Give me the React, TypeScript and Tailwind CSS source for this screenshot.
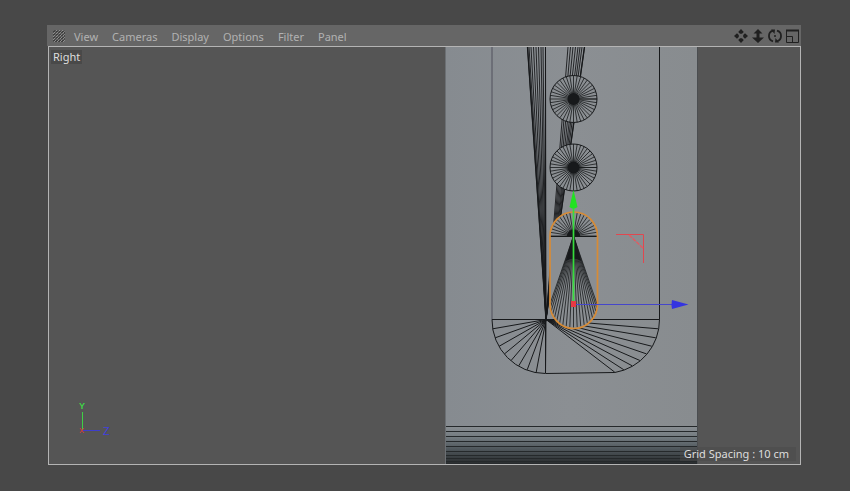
const point = (cx: number, cy: number, r: number, deg: number) => {
  const a = (deg * Math.PI) / 180;
  return [cx + r * Math.cos(a), cy + r * Math.sin(a)];
};

type FanProps = { from: [number, number]; centre: [number, number]; r: number; start: number; end: number; count: number; width?: number };

function Fan({ from, centre, r, start, end, count, width = 1 }: FanProps) {
  const d = Array.from({ length: count + 1 }, (_, i) => {
    const [x, y] = point(centre[0], centre[1], r, start + ((end - start) * i) / count);
    return `M${from[0]} ${from[1]}L${x.toFixed(2)} ${y.toFixed(2)}`;
  }).join("");
  return <path d={d} stroke="#17191b" strokeWidth={width} fill="none" />;
}

function Disc({ cy }: { cy: number }) {
  return (
    <g>
      <circle cx="573.5" cy={cy} r="23.5" fill="#8a8e92" stroke="#17191b" />
      <Fan from={[573.5, cy]} centre={[573.5, cy]} r={23.5} start={0} end={360} count={40} width={0.8} />
      <circle cx="573.5" cy={cy} r="6" fill="#17191b" />
    </g>
  );
}

const LEFT_BUNDLE = [527.5, 529, 531, 533.5, 536, 538.5, 541, 543, 545.5];
const RIGHT_BUNDLE = [568, 570.5, 573, 575.5, 578, 580, 582, 584.5];
const EDGE_ROWS = [426.5, 431.5, 436.5, 441.5, 446.5, 451.5, 455.5, 458.5, 461.5];

function Scene() {
  return (
    <svg viewBox="49 47 751 417" preserveAspectRatio="xMidYMid slice" className="block w-full" aria-label="Right viewport">
      <defs>
        <linearGradient id="face" x1="0" y1="0" x2="1" y2="0">
          <stop offset="0" stopColor="#868b90" />
          <stop offset="0.5" stopColor="#8b8f93" />
          <stop offset="1" stopColor="#888c8f" />
        </linearGradient>
        <linearGradient id="edge" x1="0" y1="0" x2="0" y2="1">
          <stop offset="0" stopColor="#8a8f93" />
          <stop offset="0.3" stopColor="#727a7f" />
          <stop offset="0.6" stopColor="#50585d" />
          <stop offset="1" stopColor="#282b2d" />
        </linearGradient>
      </defs>
      <rect x="445" y="47" width="252" height="417" fill="url(#face)" />
      <rect x="445" y="426" width="252" height="38" fill="url(#edge)" />
      <path d={EDGE_ROWS.map((y) => `M445 ${y}H698`).join("")} stroke="#25292b" strokeWidth="1" />
      <path d="M445.5 47V464" stroke="#6c7074" />
      <path d="M697.5 47V464" stroke="#4a4d50" />
      <g stroke="#17191b" fill="none">
        <path d="M492 47V319.5" stroke="#50515d" />
        <path d="M659.5 47V319.5M492 319.5H659.5M545.5 47V373" />
        <path d="M492 319.5A53.5 53.5 0 0 0 545.5 373.5L614.8 372.5A53.5 53.5 0 0 0 659.5 319.5" />
        <path d={LEFT_BUNDLE.map((x) => `M${x} 47L546 319.5`).join("")} strokeWidth="0.9" />
        <path d={RIGHT_BUNDLE.map((x) => `M${x} 47L546 319.5`).join("")} strokeWidth="0.9" />
        <path d="M527.5 47L546 319.5M584.5 47L546 319.5" strokeWidth="1.3" />
      </g>
      <Fan from={[546, 319.5]} centre={[545.5, 319.5]} r={53.5} start={90} end={180} count={9} />
      <Fan from={[546, 319.5]} centre={[605.5, 319.5]} r={53.5} start={0} end={80} count={8} />
      <Disc cy={99} />
      <Disc cy={167.5} />
      <path d="M550 236a23.75 24 0 0 1 47.5 0v68a23.75 24.5 0 0 1-47.5 0z" fill="#8a8e92" />
      <path d="M550 236.5H597.5" stroke="#17191b" />
      <Fan from={[573.5, 236]} centre={[573.5, 236]} r={23.5} start={180} end={360} count={20} width={0.8} />
      <Fan from={[573.5, 236]} centre={[573.5, 304]} r={23.5} start={0} end={180} count={20} width={0.8} />
      <path d="M567 236a6.5 6.5 0 0 1 13 0z" fill="#17191b" />
      <path d="M573.5 236L581 261Q573.5 256 566 261z" fill="#17191b" />
      <path d="M550 236a23.75 24 0 0 1 47.5 0v68a23.75 24.5 0 0 1-47.5 0z" fill="none" stroke="#d78b35" strokeWidth="1.7" />
      <path d="M573.5 304V205" stroke="#36dc3c" strokeWidth="1.7" />
      <path d="M573.5 190L577.5 207Q573.5 210 569.5 207z" fill="#22e222" />
      <path d="M575 304.5H673" stroke="#4546ca" />
      <path d="M688.5 304.5L672 300Q671 304.5 672 309z" fill="#3434e0" />
      <rect x="571" y="301" width="5" height="6" fill="#e83a44" />
      <path d="M616 234.5H643.5V263" stroke="#e0474f" fill="none" />
      <path d="M629 235L643 248" stroke="#dd5d64" strokeWidth="1.5" strokeDasharray="4 1" />
      <path d="M82.5 430V412" stroke="#3fd045" />
      <path d="M83 430.5H100" stroke="#3e3ecb" />
      <path d="M80 428l4 5M84 428l-4 5" stroke="#d33b43" />
      <text x="79" y="409" className="font-['Liberation_Sans'] text-[9px] font-bold" fill="#40d248">Y</text>
      <text x="103" y="435" className="font-['Liberation_Sans'] text-[11px]" fill="#4141df">Z</text>
    </svg>
  );
}

const MENUS = ["View", "Cameras", "Display", "Options", "Filter", "Panel"];

function Grip() {
  return (
    <svg viewBox="0 0 12 12" className="size-3" aria-hidden="true">
      <path
        d="M0 2.500L2.500 0M0 5.500L5.500 0M0 8.500L8.500 0M0 11.500L11.500 0M2.500 12L12 2.500M5.500 12L12 5.500M8.500 12L12 8.500"
        stroke="#1c1c1c"
        strokeWidth="1"
        strokeDasharray="3 1"
      />
      <path d="M0 4L4 0M0 7L7 0M0 10L10 0M1 12L12 1M4 12L12 4M7 12L12 7M10 12L12 10" stroke="#9a9a9a" strokeWidth="0.8" strokeDasharray="3 1" />
    </svg>
  );
}

const TOOLS = [
  {
    label: "Move camera",
    icon: <path d="M7 0l2.800 3L8 4.800H6L4.200 3zM7 14l2.800-3L8 9.200H6L4.200 11zM0 7l3-2.800L4.800 6v2L3 9.800zM14 7l-3-2.800L9.200 6v2L11 9.800z" fill="#202020" />,
  },
  {
    label: "Zoom camera",
    icon: <path d="M7 0l4.500 4.500H8.500v4H13L7 14 1 8.500h4.500v-4H2.500z" fill="#202020" />,
  },
  {
    label: "Rotate camera",
    icon: (
      <g>
        <path d="M5 12.300A5.500 5.500 0 0 1 5 1.700M9 1.700A5.500 5.500 0 0 1 9 12.300" fill="none" stroke="#202020" strokeWidth="1.800" />
        <path d="M3 0.500H7L6.500 5zM11 13.500H7L7.500 9z" fill="#202020" />
        <circle cx="7" cy="7" r="1" fill="#202020" />
      </g>
    ),
  },
  {
    label: "Toggle view",
    icon: (
      <g fill="none" stroke="#202020">
        <path d="M1.500 1V13.500H13.500V1" />
        <path d="M1 1.500H14" strokeWidth="2" />
        <path d="M2 7.500H7.500V13" />
      </g>
    ),
  },
];

export default function App() {
  return (
    <main className="flex min-h-screen flex-col bg-[#484848] pt-[25px] pr-[49px] pb-[26px] pl-[47px] font-['Noto_Sans',sans-serif] text-[11px]">
      <header className="flex h-[21px] items-center justify-between bg-[#666666] pl-[6px] text-[#b2b2b2]">
        <div className="flex items-center gap-[9px]">
          <Grip />
          <nav className="flex gap-[14px] pt-[3px]">
            {MENUS.map((name) => (
              <button key={name} type="button" className="leading-4">
                {name}
              </button>
            ))}
          </nav>
        </div>
        <div className="flex items-center gap-[3px] pr-[2px]">
          {TOOLS.map((tool) => (
            <button key={tool.label} type="button" aria-label={tool.label}>
              <svg viewBox="0 0 14 14" className="block size-[14px]">
                {tool.icon}
              </svg>
            </button>
          ))}
        </div>
      </header>
      <section className="relative ml-px border border-[#b4b4b4] bg-[#555555]">
        <Scene />
        <span className="absolute top-[3px] left-[2px] bg-[#494949] px-[2px] leading-[14px] text-[#dedede]">Right</span>
        <span className="absolute right-1 bottom-[3px] bg-[#494949]/50 pr-[7px] pl-1 leading-[14px] text-[#dedede]">Grid Spacing : 10 cm</span>
      </section>
    </main>
  );
}
